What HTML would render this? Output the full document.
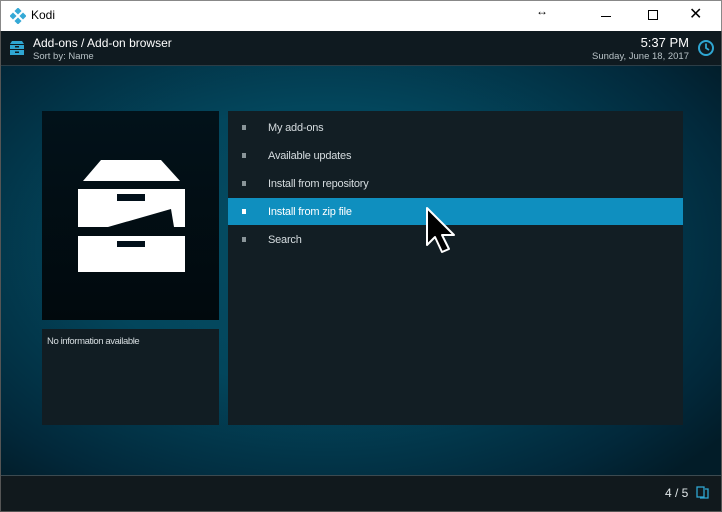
<!DOCTYPE html>
<html><head><meta charset="utf-8"><style>
*{margin:0;padding:0;box-sizing:border-box}
body{width:722px;height:512px;overflow:hidden;font-family:"Liberation Sans",sans-serif;background:#fff;position:relative}
.tb{position:absolute;left:0;top:0;width:722px;height:31px;background:#fff;border:1px solid #888;border-bottom:none}
.main{position:absolute;left:0;top:31px;width:722px;height:481px;background:radial-gradient(ellipse 70% 65% at 45% 45%,#054d64 0%,#03465c 45%,#02283a 85%,#021c28 100%);border-left:1px solid #555;border-right:1px solid #555;border-bottom:1px solid #555}
.hdr{position:absolute;left:0;top:0;width:720px;height:35px;background:#0f1a20;border-bottom:1px solid #2c3d46}
.foot{position:absolute;left:0;top:444px;width:720px;height:36px;background:#11191d;border-top:1px solid #3c4a50}
.p{position:absolute}
.item{position:absolute;left:227px;width:455px;height:27px;color:#d6dde0;font-size:11px;line-height:29px;padding-left:40px;letter-spacing:-0.2px}
.item:before{content:"";position:absolute;left:14px;top:11px;width:4px;height:5px;background:#8a9599}
.sel{background:#0f8fbf;color:#fff}
.sel:before{background:#fff}
</style></head><body>
<div class="tb">
<svg class="p" style="left:9px;top:7px" width="16" height="16" viewBox="0 0 16 16"><g fill="#35a9d6"><rect x="5.5" y="0.5" width="5" height="5" transform="rotate(45 8 3)"/><rect x="0.5" y="5.5" width="5" height="5" transform="rotate(45 3 8)"/><rect x="10.5" y="5.5" width="5" height="5" transform="rotate(45 13 8)"/><rect x="5.5" y="10.5" width="5" height="5" transform="rotate(45 8 13)"/></g></svg>
<div class="p" style="left:30px;top:7px;font-size:12px;color:#000">Kodi</div>
<div class="p" style="left:535px;top:3px;font-size:12px;color:#000">↔</div>
<div class="p" style="left:600px;top:15px;width:10px;height:1px;background:#000"></div>
<div class="p" style="left:647px;top:9px;width:10px;height:10px;border:1px solid #000"></div>
<div class="p" style="left:688px;top:3px;font-size:16px;color:#000">✕</div>
</div>
<div class="main">
<div class="hdr">
<svg class="p" style="left:8px;top:9px" width="16" height="16" viewBox="0 0 16 16"><path d="M3 1h10l2 3H1z M1 5h14v4H1z M1 10h14v5H1z" fill="#2fa6d2"/><rect x="6" y="6" width="4" height="1.5" fill="#0f1a20"/><rect x="6" y="11.5" width="4" height="1.5" fill="#0f1a20"/></svg>
<div class="p" style="left:32px;top:5px;font-size:12px;color:#fff">Add-ons / Add-on browser</div>
<div class="p" style="left:32px;top:20px;font-size:9.5px;color:#b8c2c6">Sort by: Name</div>
<div class="p" style="right:32px;top:4px;font-size:13px;color:#fff">5:37 PM</div>
<div class="p" style="right:32px;top:20px;font-size:9.5px;color:#b8c2c6">Sunday, June 18, 2017</div>
<svg class="p" style="left:696px;top:8px" width="18" height="18" viewBox="0 0 18 18"><circle cx="9" cy="9" r="7" fill="none" stroke="#2fa6d2" stroke-width="2"/><path d="M9 4.5V9l3 2" fill="none" stroke="#2fa6d2" stroke-width="1.8"/></svg>
</div>
<div class="p" style="left:41px;top:80px;width:177px;height:209px;background:linear-gradient(#02121a,#01090d)"></div>
<svg class="p" style="left:0;top:-31px" width="722" height="512" viewBox="0 0 722 512"><path d="M100 160H160L179 181H82Z" fill="#fff"/><path d="M77 189H184V227H173L170 209L107 227H77Z" fill="#fff"/><rect x="116" y="194" width="28" height="7" fill="#02101a"/><rect x="77" y="236" width="107" height="36" fill="#fff"/><rect x="116" y="241" width="28" height="6" fill="#02101a"/></svg>
<div class="p" style="left:41px;top:298px;width:177px;height:96px;background:#111d23"></div>
<div class="p" style="left:46px;top:305px;font-size:9.5px;color:#d6dde0;letter-spacing:-0.4px">No information available</div>
<div class="p" style="left:227px;top:80px;width:455px;height:314px;background:#121e24"></div>
<div style="position:absolute;left:0;top:-31px;width:722px;height:512px">
<div class="item" style="top:114px">My add-ons</div>
<div class="item" style="top:142px">Available updates</div>
<div class="item" style="top:170px">Install from repository</div>
<div class="item sel" style="top:198px">Install from zip file</div>
<div class="item" style="top:226px">Search</div>
<svg class="p" style="left:423px;top:206px" width="34" height="50" viewBox="0 0 34 50"><path d="M3 2V39L11 31L18 46L25 43L18 29H30Z" fill="#000" stroke="#fff" stroke-width="2" stroke-linejoin="round"/></svg>
</div>
<div class="foot">
<div class="p" style="left:664px;top:10px;font-size:12px;color:#e0e6e8">4 / 5</div>
<svg class="p" style="left:695px;top:10px" width="14" height="14" viewBox="0 0 14 14"><rect x="1" y="1" width="7" height="10" fill="none" stroke="#2fa6d2" stroke-width="1.3"/><path d="M9 3h3v9H4" fill="none" stroke="#2fa6d2" stroke-width="1.3"/></svg>
</div>
</div>
</body></html>
